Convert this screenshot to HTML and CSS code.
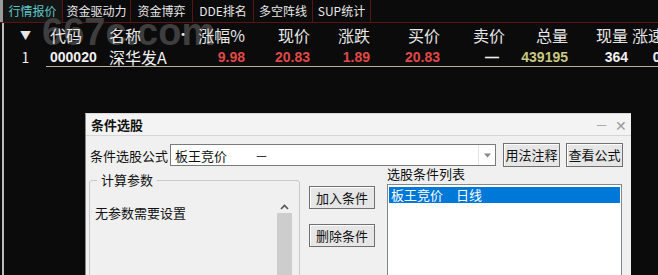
FILE: index.html
```
<!DOCTYPE html>
<html lang="zh-CN">
<head>
<meta charset="utf-8">
<title>行情报价</title>
<link rel="stylesheet" href="styles.css">
</head>
<body>
<div class="screen">
  <div class="tabs">
    <div class="tab active">行情报价</div>
    <div class="tab">资金驱动力</div>
    <div class="tab">资金博弈</div>
    <div class="tab">DDE排名</div>
    <div class="tab">多空阵线</div>
    <div class="tab">SUP统计</div>
  </div>
  <div class="watermark">667c.com</div>
  <div class="quote">
    <div class="row head">
      <div class="c idx">▼</div>
      <div class="c code">代码</div>
      <div class="c name">名称<span class="dot">•</span></div>
      <div class="c r">涨幅%</div>
      <div class="c r">现价</div>
      <div class="c r">涨跌</div>
      <div class="c r">买价</div>
      <div class="c r">卖价</div>
      <div class="c r">总量</div>
      <div class="c r">现量</div>
      <div class="c l">涨速</div>
    </div>
    <div class="row data">
      <div class="c idx">1</div>
      <div class="c code num">000020</div>
      <div class="c name">深华发A</div>
      <div class="c r num red">9.98</div>
      <div class="c r num red">20.83</div>
      <div class="c r num red">1.89</div>
      <div class="c r num red">20.83</div>
      <div class="c r num dash">—</div>
      <div class="c r num yel">439195</div>
      <div class="c r num">364</div>
      <div class="c r num">0.00</div>
    </div>
    <div class="rule"></div>
  </div>

  <div class="dialog">
    <div class="titlebar">
      <span class="title">条件选股</span>
      <span class="winbtns"><span class="min">—</span><span class="close">✕</span></span>
    </div>
    <div class="body">
      <div class="formula">
        <span class="lbl">条件选股公式</span>
        <div class="combo">
          <span class="ctext">板王竞价</span><span class="cdash">－</span>
          <span class="carrow"><svg width="9" height="5" viewBox="0 0 9 5"><path d="M1 0.5 L4.5 4.5 L8 0.5Z" fill="#888"/></svg></span>
        </div>
        <button class="btn">用法注释</button>
        <button class="btn">查看公式</button>
      </div>
      <div class="lower">
        <fieldset class="params">
          <legend>计算参数</legend>
          <div class="pinner">
            <div class="ptext">无参数需要设置</div>
            <div class="scroll">
              <div class="sarrow"><svg width="9" height="6" viewBox="0 0 9 6"><path d="M1 5 L4.5 1.5 L8 5" stroke="#555" stroke-width="1.6" fill="none"/></svg></div>
              <div class="thumb"></div>
            </div>
          </div>
        </fieldset>
        <div class="mid">
          <button class="btn wide">加入条件</button>
          <button class="btn wide">删除条件</button>
        </div>
        <div class="listcol">
          <div class="llbl">选股条件列表</div>
          <div class="listbox">
            <div class="item sel">板王竞价　日线</div>
          </div>
        </div>
      </div>
    </div>
  </div>
</div>
</body>
</html>
```
FILE: styles.css
```
* { box-sizing: border-box; }
html, body { margin: 0; padding: 0; }
body { background: #0b0b0b; width: 658px; height: 275px; overflow: hidden; }
.screen { position: relative; width: 658px; height: 275px; overflow: hidden; background: #0b0b0b; font-family: "Noto Sans CJK SC", sans-serif; }

.tabs { display: flex; height: 23px; border-bottom: 1px solid #5a1414; background: #0b0b0b; }
.tab { color: #e8e8e8; font-size: 12px; line-height: 22px; text-align: center; border-right: 1px solid #5a1414; white-space: nowrap; }
.tab.active { color: #5fc8c8; border-left: 3px solid #9a9a9a; background: #141414; width: 63px; }
.tab:nth-child(2) { width: 68px; }
.tab:nth-child(3) { width: 62px; }
.tab:nth-child(4) { width: 61px; }
.tab:nth-child(5) { width: 59px; }
.tab:nth-child(6) { width: 58px; }

.quote { position: relative; border-left: 2px solid #bdbdbd; margin-left: 2px; height: 252px; }
.row { display: grid; grid-template-columns: 41px 55px 75px 70px 65px 60px 70px 65px 63px 60px 52px; align-items: center; white-space: nowrap; }
.row.head { height: 22px; color: #e6e6e6; font-size: 16px; }
.row.data { height: 21px; color: #f0f0f0; font-size: 16px; margin-top: 0; }
.c { overflow: visible; }
.idx { text-align: center; font-size: 14px; padding-left: 2px; }
.head .idx { font-size: 11px; }
.code { padding-left: 5px; }
.name { padding-left: 9px; position: relative; }
.dot { position: absolute; left: 76px; top: 0; font-size: 14px; }
.r { text-align: right; }
.l { padding-left: 4px; }
.num { font-family: "Liberation Sans", Arial, sans-serif; font-weight: bold; font-size: 14px; }
.red { color: #e04848; }
.yel { color: #c8c882; }
.dash { padding-right: 6px; }
.rule { height: 1px; background: #b9b39a; margin-left: 42px; margin-top: 0; }

.watermark { position: absolute; left: 42px; top: 13px; font-family: "Liberation Sans", Arial, sans-serif; font-weight: bold; font-size: 38px; line-height: 38px; color: #3e3e3e; pointer-events: none; }

.dialog { position: absolute; left: 85px; top: 113px; width: 546px; height: 180px; background: #f0f0f0; border-left: 1px solid #8a8a8a; border-top: 1px solid #d9d9d9; font-size: 13px; color: #111; }
.titlebar { height: 22px; display: flex; align-items: center; justify-content: space-between; padding: 0 4px 0 5px; background: #f3f3f3; border-bottom: 1px solid #d6d6d6; }
.title { font-weight: bold; font-size: 13px; }
.winbtns { display: flex; gap: 8px; color: #9a9a9a; font-size: 14px; }
.min { font-size: 12px; }

.body { padding: 7px 0 0 4px; }
.formula { display: flex; align-items: center; height: 24px; }
.lbl { width: 80px; }
.combo { width: 326px; height: 22px; background: #fff; border: 1px solid #7a7a7a; display: flex; align-items: center; padding-left: 4px; position: relative; }
.ctext { width: 80px; }
.cdash { color: #333; }
.carrow { position: absolute; right: 0; top: 0; bottom: 0; width: 17px; border-left: 1px solid #e4e4e4; display: flex; align-items: center; justify-content: center; }
.btn { font-family: "Noto Sans CJK SC", sans-serif; font-size: 13px; color: #111; background: #e6e6e6; border: 1px solid #707070; box-shadow: inset 1px 1px 0 #fff; height: 24px; padding: 0; width: 57px; margin-left: 7px; line-height: 20px; }
.formula .btn + .btn { margin-left: 6px; }

.lower { display: flex; align-items: flex-start; margin-top: -1px; }
.params { margin: 7px 0 0 -1px; width: 211px; height: 120px; border: 1px solid #c8c8c8; border-radius: 3px; padding: 0 5px 0 5px; }
.params legend { padding: 0 4px; margin-left: 2px; font-size: 13px; line-height: 14px; }
.pinner { display: flex; justify-content: space-between; margin-top: 10px; }
.ptext { padding-top: 6px; margin-left: 0; }
.scroll { width: 15px; height: 90px; display: flex; flex-direction: column; margin-right: 2px; }
.sarrow { height: 11px; display: flex; justify-content: center; align-items: center; margin-top: 4px; }
.thumb { flex: 1; background: #cdcdcd; margin-top: 1px; }

.mid { display: flex; flex-direction: column; gap: 15px; margin-left: 9px; margin-top: 20px; }
.btn.wide { width: 66px; margin-left: 0; height: 23px; }
.listcol { margin-left: 12px; margin-top: 0; }
.llbl { height: 18px; line-height: 15px; }
.listbox { width: 235px; height: 100px; background: #fff; border: 1px solid #828790; padding: 2px 1px; }
.item { height: 16px; line-height: 15px; padding-left: 2px; }
.item.sel { background: #0078d7; color: #fff; }
```
